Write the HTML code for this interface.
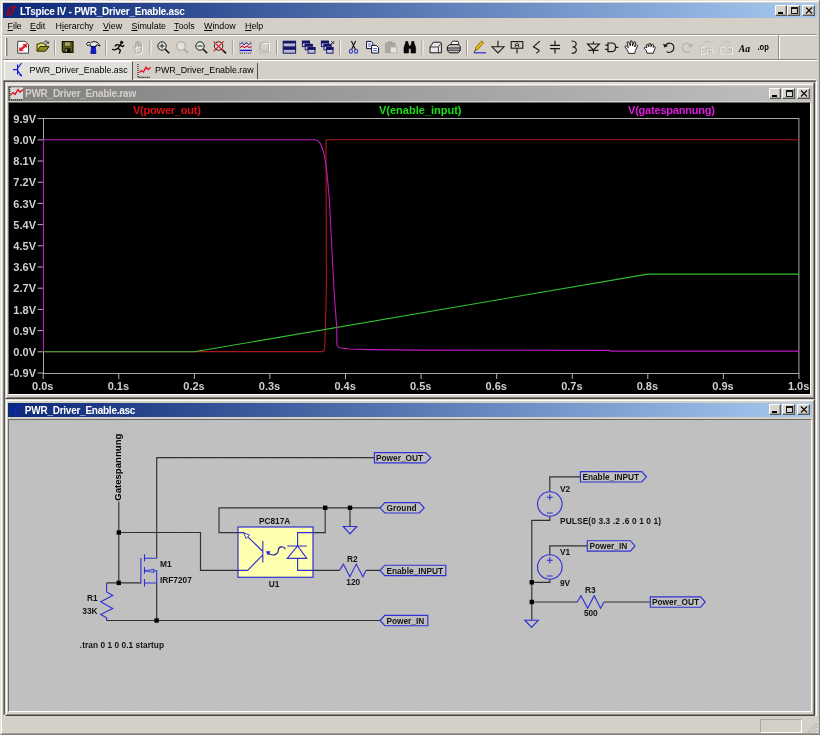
<!DOCTYPE html>
<html><head><meta charset="utf-8"><title>LTspice IV - PWR_Driver_Enable.asc</title>
<style>
html,body{margin:0;padding:0;}
body{will-change:transform;width:820px;height:735px;overflow:hidden;position:relative;background:#d4d0c8;font-family:"Liberation Sans",sans-serif;}
.abs{position:absolute;}
#frame{left:0;top:0;width:820px;height:735px;box-sizing:border-box;border:1px solid #e4e2dc;border-right-color:#8c8a84;border-bottom-color:#807e78;background:#d4d0c8;}
#frame2{left:1px;top:1px;width:818px;height:733px;box-sizing:border-box;border:1px solid #fff;border-right-color:#c8c6c0;border-bottom-color:#a09e98;}
#title{left:3px;top:3px;width:814px;height:15px;background:linear-gradient(to right,#0c2878,#a6caf0);}
#title span{position:absolute;left:17px;top:1.6px;font-weight:bold;font-size:10px;color:#fff;line-height:13px;white-space:nowrap;letter-spacing:-0.25px}
.cbtn{position:absolute;box-sizing:border-box;background:#d8d5ce;border:1px solid #fff;border-right-color:#5c5a56;border-bottom-color:#5c5a56;box-shadow:inset -1px -1px 0 #a4a29c;}
#menu{left:3px;top:19px;width:814px;height:15px;font-size:8.9px;color:#000;}
#menu span{position:absolute;top:1.2px;line-height:12px;white-space:nowrap}
#menu u{text-decoration:underline;text-underline-offset:1px}
#tbline{left:3px;top:34px;width:814px;height:1px;background:#9a9890;}
#tbline2{left:3px;top:35px;width:814px;height:1px;background:#fff;}
.sep{position:absolute;top:39px;width:1px;height:17px;background:#8c8a84;box-shadow:1px 0 0 #fff;}
.ico{position:absolute;top:40px;height:14px;overflow:visible}
#tabs{left:3px;top:59px;width:814px;height:21px;}
.plbl{position:absolute;font-weight:bold;font-size:11px;line-height:12px;white-space:nowrap;}
.ylab{color:#d0d0d0;width:28px;text-align:right;left:8px}
.xlab{color:#d0d0d0;width:40px;text-align:center;top:380px}
.st{font-weight:bold;font-size:8.3px;fill:#141414;font-family:"Liberation Sans",sans-serif}
</style></head><body>
<div id="frame" class="abs"></div><div id="frame2" class="abs"></div>
<!-- TITLE -->
<div id="title" class="abs"><span>LTspice IV - PWR_Driver_Enable.asc</span>
<svg class="abs" style="left:0px;top:0px" width="18" height="15" viewBox="3 3 18 15"><path d="M5.8 15.4 L7.8 8.6 L10.2 8.6 L9 13 L11.4 13 L10.8 15.4 Z M10.8 6 H16.6 L16 8.2 H14.8 L13.2 13.6 H10.8 L12.4 8.2 H10.2 Z" fill="#8c0a24"/></svg>
</div>
<div class="cbtn" style="left:775px;top:5px;width:12px;height:11px"><div class="abs" style="left:2px;top:6px;width:5px;height:2px;background:#000"></div></div>
<div class="cbtn" style="left:787px;top:5px;width:13px;height:11px"><div class="abs" style="left:2.5px;top:1px;width:7.5px;height:7px;box-sizing:border-box;border:1px solid #181818;border-top-width:2px"></div></div>
<div class="cbtn" style="left:802px;top:5px;width:13px;height:11px"><svg class="abs" style="left:2px;top:1px" width="8" height="7" viewBox="0 0 8 7"><path d="M1 0.5 L7 6.5 M7 0.5 L1 6.5" stroke="#101010" stroke-width="1.3"/></svg></div>
<!-- MENU -->
<div id="menu" class="abs">
<span style="left:4.5px"><u>F</u>ile</span>
<span style="left:27px"><u>E</u>dit</span>
<span style="left:52.5px">H<u>i</u>erarchy</span>
<span style="left:100px"><u>V</u>iew</span>
<span style="left:128.5px"><u>S</u>imulate</span>
<span style="left:171px"><u>T</u>ools</span>
<span style="left:201px"><u>W</u>indow</span>
<span style="left:242px"><u>H</u>elp</span>
</div>
<div id="tbline" class="abs"></div><div id="tbline2" class="abs"></div>
<!-- TOOLBAR -->
<div id="toolbar"><svg class="abs" style="left:0;top:0" width="820" height="60" viewBox="0 0 820 60" fill="none" stroke-linecap="butt">
<!-- gripper -->
<path d="M5.5 38 V56" stroke="#fff"/><path d="M6.7 38 V56" stroke="#7c7a74" stroke-width="1.4"/>
<!-- separators -->
<g stroke="#9c9a94"><path d="M54.5 40 V55 M105.6 40 V55 M150 40 V55 M232.4 40 V55 M276.5 40 V55 M339.6 40 V55 M422 40 V55 M466.5 40 V55"/></g>
<g stroke="#f4f3f0"><path d="M55.5 40 V55 M106.6 40 V55 M151 40 V55 M233.4 40 V55 M277.5 40 V55 M340.6 40 V55 M423 40 V55 M467.5 40 V55"/></g>
<path d="M80 40 V55" stroke="#c4c8d8"/>
<path d="M778.5 35 V59" stroke="#8c8a84"/><path d="M779.5 35 V59" stroke="#fff"/>
<!-- 1 new -->
<path d="M17.7 41.3 H25 L28.5 44.6 V53.2 H17.7 Z" fill="#fff" stroke="#404040" stroke-width="1"/>
<path d="M19.4 51 L19.8 47.6 L20.8 48.4 L24 45.6 L23 44.6 L26.8 44 L26.4 47.6 L25.4 46.8 L22.2 49.6 L23.2 50.6 Z" fill="#e81828" stroke="#e81828" stroke-width="0.7"/>
<!-- 2 open -->
<path d="M37 51 V44 H39 L40 43 H43.5 L44.5 44.2 H46 V46.3" fill="#d8d870" stroke="#303000" stroke-width="1"/>
<path d="M37 51.2 L40 46.5 H49 L45.5 51.2 Z" fill="#8c8c20" stroke="#303000" stroke-width="1"/>
<path d="M44 42 C45.5 40.4 47.5 40.8 48 43 M48.4 43.6 L46.6 42.6 M48.4 43.6 L49 41.6" stroke="#202020" stroke-width="0.9"/>
<!-- 3 save -->
<path d="M62.3 41.6 H73 V52.4 H63.4 L62.3 51.3 Z" fill="#5a5a12" stroke="#141400" stroke-width="1.2"/>
<rect x="64.6" y="42" width="6" height="4.2" fill="#a4a468" stroke="#303010" stroke-width="0.6"/>
<rect x="64.6" y="48.4" width="6" height="3.6" fill="#101008"/>
<rect x="65.4" y="49.2" width="1.6" height="2.4" fill="#a0a070"/>
<!-- 4 hammer -->
<path d="M86.6 44.5 C86.6 42.2 89 41.8 90.5 43 C93 40.6 98.5 41.2 100 46.2 C98.6 45.2 97 44.8 96 45 V46.6 H90.8 V45 C89.6 44.4 88.6 45.6 87.6 45.6 Z" fill="#e8e8e8" stroke="#101010" stroke-width="1"/>
<path d="M91.6 46.8 H95.2 L96 53.4 H90.8 Z" fill="#1018d0" stroke="#000890" stroke-width="0.8"/>
<!-- 5 runner -->
<g stroke="#000" stroke-width="1.25" stroke-linecap="round" stroke-linejoin="round">
<circle cx="121.6" cy="42.4" r="1.2" fill="#000" stroke-width="0.8"/>
<path d="M120.8 44.2 L117.8 48.4 M119.8 45.2 L116.4 44.6 L115.2 46 M120.2 45.4 L122.8 46.6 L123.8 45.4 M117.8 48.4 L114.6 50 L112.6 49.4 M117.8 48.4 L120.4 50 L119.4 53.2"/></g>
<!-- 6 hand (disabled) -->
<g stroke="#fff" stroke-width="1" transform="translate(0.8,0.8)"><path d="M135.2 53 V50 L133.2 47.4 L134.2 46.6 L135.6 48 V42.6 H137 V46.6 V41.6 H138.6 V46.6 V42.4 H140 V47 V43.8 H141.4 V50 L140.6 53 Z"/></g>
<g stroke="#a8a6a0" stroke-width="1"><path d="M135.2 53 V50 L133.2 47.4 L134.2 46.6 L135.6 48 V42.6 H137 V46.6 V41.6 H138.6 V46.6 V42.4 H140 V47 V43.8 H141.4 V50 L140.6 53 Z"/></g>
<!-- 7 zoom in -->
<g stroke="#101010"><circle cx="162" cy="46" r="4.2" stroke-width="0.95" fill="#dde6e0"/><path d="M159.6 46 H164.4 M162 43.6 V48.4" stroke-width="0.9"/><path d="M165.2 49.2 L169.2 53.2" stroke-width="1.6"/></g>
<!-- 8 zoom gray -->
<g stroke="#a8a6a0"><circle cx="181" cy="46" r="4.3" stroke-width="1.1" fill="#e4e2dc"/><path d="M184.2 49.2 L188.2 53.2" stroke-width="1.7"/></g>
<!-- 9 zoom out -->
<g stroke="#101010"><circle cx="200" cy="46" r="4.2" stroke-width="0.95" fill="#dde6e0"/><path d="M197.6 46 H202.4" stroke-width="0.9"/><path d="M203.2 49.2 L207.2 53.2" stroke-width="1.6"/></g>
<!-- 10 zoom cancel -->
<g stroke="#101010"><circle cx="218.6" cy="46" r="4.2" stroke-width="0.95" fill="#dde6e0"/><path d="M221.8 49.2 L226 53.4" stroke-width="1.6"/></g>
<path d="M213.4 41.4 L223.4 51 M223.6 41.4 L213.6 51.4" stroke="#e02020" stroke-width="1.3"/>
<!-- 11 waveform -->
<rect x="239.6" y="42" width="12" height="10.6" fill="#dcdcec" stroke="#8888a8" stroke-width="0.5"/>
<path d="M240 44.6 L242 42.6 L244 44.8 L246.4 42.6 L248.6 44.8 L251 42.8" stroke="#101030" stroke-width="1"/>
<path d="M240 47.4 L242.4 46 L244.6 47.6 L247 46 L249.2 47.6 L251.4 46.4" stroke="#e01020" stroke-width="1.1"/>
<path d="M240 50.4 H251.6" stroke="#1010c0" stroke-width="1.4"/>
<path d="M240 53.4 H252" stroke="#404040" stroke-width="0.8" stroke-dasharray="1 1"/>
<!-- 12 gray icon -->
<g stroke="#aeaca6" stroke-width="0.9"><path d="M259.6 41.6 V53 M259.6 52.6 H271.4" stroke-dasharray="1.2 0.8"/><path d="M262 42.4 H268.6 V51 H262 M262 42.4 C259.4 44 259.4 49.4 262 51"/></g>
<path d="M263 43.4 H269.6 V52" stroke="#fff" stroke-width="0.8"/>
<!-- 13 tile -->
<rect x="283.2" y="41.2" width="12.4" height="5.6" fill="#b8b8d8" stroke="#181868" stroke-width="1"/><rect x="283.2" y="41.2" width="12.4" height="2.2" fill="#10105c"/>
<rect x="283.2" y="47.6" width="12.4" height="5.6" fill="#b8b8d8" stroke="#181868" stroke-width="1"/><rect x="283.2" y="47.6" width="12.4" height="2.2" fill="#10105c"/>
<!-- 14 cascade -->
<g stroke="#181868" stroke-width="0.95"><rect x="302.4" y="41.2" width="7" height="5.4" fill="#c8c8e0"/><rect x="302.4" y="41.2" width="7" height="1.8" fill="#10105c"/>
<rect x="305.2" y="44.4" width="7" height="5.4" fill="#c8c8e0"/><rect x="305.2" y="44.4" width="7" height="1.8" fill="#10105c"/>
<rect x="308" y="47.6" width="7" height="5.6" fill="#c8c8e0"/><rect x="308" y="47.6" width="7" height="1.8" fill="#10105c"/></g>
<!-- 15 close all -->
<g stroke="#181868" stroke-width="0.95"><rect x="321.4" y="41.2" width="7" height="5.4" fill="#c8c8e0"/><rect x="321.4" y="41.2" width="7" height="1.8" fill="#10105c"/>
<rect x="324" y="44.4" width="7" height="5.4" fill="#c8c8e0"/><rect x="324" y="44.4" width="7" height="1.8" fill="#10105c"/>
<rect x="326.6" y="47.6" width="6.4" height="5.6" fill="#c8c8e0"/><rect x="326.6" y="47.6" width="6.4" height="1.8" fill="#10105c"/></g>
<path d="M331.4 41.2 L334.2 44 M334.2 41.2 L331.4 44" stroke="#101030" stroke-width="0.9"/>
<!-- 16 scissors -->
<path d="M351.4 41 L355.6 50 M355.6 41 L351.4 50" stroke="#101010" stroke-width="1.1"/>
<ellipse cx="350.9" cy="51.3" rx="1.6" ry="2" stroke="#2838c0" stroke-width="1.1"/><ellipse cx="356.1" cy="51.3" rx="1.6" ry="2" stroke="#2838c0" stroke-width="1.1"/>
<!-- 17 copy -->
<path d="M366.6 41.4 H371 L372.8 43.2 V48.6 H366.6 Z" fill="#fff" stroke="#101040" stroke-width="1"/>
<path d="M371.6 45.4 H376.4 L378.6 47.6 V53 H371.6 Z" fill="#fff" stroke="#101040" stroke-width="1"/>
<path d="M368 44 H371 M368 46 H370.6 M373.2 48.6 H377 M373.2 50.6 H377" stroke="#3040a0" stroke-width="0.8"/>
<!-- 18 paste gray -->
<path d="M385.4 43 H395 V52.4 H385.4 Z" fill="#aaa8a2" stroke="#a09e98" stroke-width="1"/><rect x="388" y="41.4" width="4.4" height="2.4" fill="#a09e98"/>
<rect x="390.4" y="47" width="6.4" height="6" fill="#e4e2dc" stroke="#b0aea8" stroke-width="0.8"/>
<!-- 19 binoculars -->
<path d="M404 53 V47.4 L405.6 43 V41.6 H408 V43 L409 46 H410.6 L411.6 43 V41.6 H414 V43 L415.6 47.4 V53 H411 V48.6 H408.6 V53 Z" fill="#080808" stroke="#000" stroke-width="0.6"/>
<!-- 20 print setup -->
<path d="M430 52.8 V47 L433.4 42.2 H440 C441.6 42.2 441.6 44 441.4 46 V52.8 Z" fill="#e8e8e8" stroke="#181818" stroke-width="1"/>
<path d="M430 47 H438.4 L441 43.4 M438.4 47 V52.8" stroke="#181818" stroke-width="0.8"/>
<!-- 21 print -->
<path d="M450.6 45 L452.4 41.2 H458 L459 45" fill="#fff" stroke="#181818" stroke-width="0.9"/>
<path d="M447.4 50.6 V46.6 L449.6 44.6 H458.4 L460.2 46.6 V50.6 L458.4 52.8 H449.4 Z" fill="#c8c8c8" stroke="#101010" stroke-width="1"/>
<path d="M447.6 48 H460 M448 50.2 H459.8" stroke="#101010" stroke-width="0.9"/>
<!-- 22 pencil -->
<path d="M475 50.6 L476 47.4 L481.6 41 L483.6 42.6 L478 49.2 Z" fill="#f0c010" stroke="#705000" stroke-width="0.8"/>
<path d="M475 50.8 L474.2 52.6" stroke="#202020" stroke-width="1"/>
<path d="M474 52.8 H486" stroke="#3030d0" stroke-width="1.2"/>
<!-- 23 ground -->
<path d="M498 40.8 V46.8 M492 46.8 H504 L498 53 Z" stroke="#181818" stroke-width="1.1"/>
<!-- 24 label -->
<rect x="511.2" y="41.6" width="11.6" height="6.6" stroke="#181818" stroke-width="1.1"/><path d="M517 48.2 V53.4" stroke="#181818" stroke-width="1.1"/>
<path d="M515.4 47 V44.2 L516.4 43.2 H517.6 L518.6 44.2 V47 M515.4 45.4 H518.6" stroke="#181818" stroke-width="0.9"/>
<!-- 25 resistor -->
<path d="M539.8 41.2 L533.4 46.8 L538.8 50 C539.8 51 537.8 52 536.4 53.4" stroke="#181818" stroke-width="1.1"/>
<!-- 26 capacitor -->
<path d="M555 40.8 V45.4 M550 45.4 H560 M550 48.6 H560 M555 48.6 V53.4" stroke="#181818" stroke-width="1.2"/>
<!-- 27 inductor -->
<path d="M571.6 41 C577.6 41 577.6 47 572.4 47 C577.8 47 577.8 53.2 571.6 53.2" stroke="#181818" stroke-width="1.1"/>
<!-- 28 diode -->
<path d="M593.4 41.4 V44 M593.4 50 V53.4 M587.4 44 H599.4 L593.4 50 Z M588.4 50.4 H598.4" stroke="#181818" stroke-width="1.1"/>
<!-- 29 gate -->
<path d="M605.2 45.2 H608 M605.2 49.4 H608 M608 43 H612 C616.8 43 616.8 51.6 612 51.6 H608 Z M615.6 47.3 H618.4" stroke="#181818" stroke-width="1.2"/>
<!-- 30 move hand -->
<path d="M628.6 53.4 L627.6 50.6 L624.8 46.6 L626 45.6 L628.4 47.8 L627 42.4 L628.4 41.8 L630.4 46 L630.4 41 L632 41 L632.6 46 L634 41.8 L635.6 42.2 L634.6 47 L636.6 44.6 L637.6 45.6 L635.4 50.6 L634.8 53.4 Z" fill="#fff" stroke="#101010" stroke-width="0.9"/>
<!-- 31 drag hand -->
<path d="M647 53.2 L646.4 50.8 L644.2 48.2 L645.2 46.8 L646.8 48 L646.6 44.8 L648 44.4 L648.8 46.8 L649 43.6 L650.6 43.6 L651 46.8 L652 44.2 L653.4 44.6 L653.2 47.6 L654.4 46.4 L655.4 47.2 L654 51 L653.4 53.2 Z" fill="#fff" stroke="#101010" stroke-width="0.9"/>
<!-- 32 undo -->
<path d="M665.4 46 C667.4 41.6 673.6 42.6 673.8 47.4 C674 51.6 669.6 53.6 666.6 51.6" stroke="#181818" stroke-width="1.1"/><path d="M663 43.6 L664.4 47.6 L668 46 Z" fill="#181818"/>
<!-- 33 redo gray -->
<path d="M690.6 46 C688.6 41.6 682.6 42.6 682.4 47.4 C682.2 51.6 686.6 53.6 689.6 51.6" stroke="#b4b2ac" stroke-width="1.2"/><path d="M693 43.4 L691.6 47.8 L687.6 46 Z" fill="#b4b2ac"/>
<!-- 34 rotate gray -->
<g stroke="#b4b2ac" stroke-width="1"><path d="M703 43.6 C704.6 40.8 709.4 40.8 711 43.6" stroke-dasharray="1.6 1"/><path d="M704.4 46 H700.4 V53 H704.4 M700.4 49.4 H703.4 M706.4 53 V48.4 H709 V53 M709 48.4 H712 V53"/></g>
<g stroke="#fff" stroke-width="0.7" transform="translate(0.9,0.9)"><path d="M704.4 46 H700.4 V53 H704.4 M706.4 53 V48.4 H709 M709 48.4 H712 V53"/></g>
<!-- 35 mirror gray -->
<g stroke="#b4b2ac" stroke-width="1"><path d="M722.6 43.6 C724.2 40.8 729 40.8 730.6 43.6" stroke-dasharray="1.6 1"/><path d="M724 46 H720 V53 H724 M720 49.4 H723 M727.6 46 H731.6 V53 H727.6 M731.6 49.4 H728.6"/></g>
<g stroke="#fff" stroke-width="0.7" transform="translate(0.9,0.9)"><path d="M724 46 H720 V53 H724 M727.6 46 H731.6 V53 H727.6"/></g>
<!-- 36 Aa -->
<text x="738.8" y="51.8" font-family="Liberation Serif,serif" font-style="italic" font-weight="bold" font-size="10.4" fill="#000" stroke="none" textLength="11.4" lengthAdjust="spacingAndGlyphs">Aa</text>
<!-- 37 .op -->
<text x="757.4" y="49.5" font-family="Liberation Sans,sans-serif" font-weight="bold" font-size="8.6" fill="#000" stroke="none" textLength="11.4" lengthAdjust="spacingAndGlyphs">.op</text>
</svg>
</div>
<div id="mdi"><div class="abs" style="left:3px;top:59px;width:814px;height:1px;background:#8c8a84"></div>
<div class="abs" style="left:3px;top:60px;width:814px;height:1px;background:#fff"></div>
<!-- active tab -->
<div class="abs" style="left:4px;top:61px;width:129px;height:19px;box-sizing:border-box;background:#e2e0da;border-top:1px solid #fff;border-left:1px solid #fff;border-right:1px solid #55534e;"></div>
<div class="abs" style="left:134px;top:63px;width:124px;height:16px;box-sizing:border-box;border-right:1px solid #55534e;"></div>
<svg class="abs" style="left:0;top:56px" width="300" height="50" viewBox="0 56 300 50" fill="none">
<path d="M13 69.6 H17.4 M17.6 64.6 V74.6 M17.8 68 L21.6 63 M17.8 71 L21.6 76.2" stroke="#1414e0" stroke-width="1.2"/><path d="M22 76.6 L19.2 75.4 L21 73.6 Z" fill="#1414e0"/>
<path d="M138 64 V77.4 H150.6" stroke="#101010" stroke-width="1.1" stroke-dasharray="1.1 0.9"/>
<path d="M139.4 72.6 L141.6 70.6 L143.4 72 L146 67.2 L148 69.6 L150.6 67.6" stroke="#e01020" stroke-width="1.3"/>
</svg>
<div class="abs" style="left:29.5px;top:64px;font-size:8.9px;line-height:12px;color:#000;white-space:nowrap">PWR_Driver_Enable.asc</div>
<div class="abs" style="left:155px;top:64px;font-size:8.9px;line-height:12px;color:#000;white-space:nowrap">PWR_Driver_Enable.raw</div>
<div class="abs" style="left:133px;top:78.5px;width:683px;height:1px;background:#f6f5f2"></div>
<!-- MDI client edge -->
<div class="abs" style="left:3px;top:80px;width:814px;height:636px;box-sizing:border-box;border:1px solid #8a8882;border-right-color:#fff;border-bottom-color:#fff;background:#d4d0c8"></div>
<div class="abs" style="left:4px;top:81px;width:812px;height:634px;box-sizing:border-box;border:1px solid #58564f;border-right-color:#d4d0c8;border-bottom-color:#d4d0c8;"></div>
<!-- child window 1 (plot) -->
<div class="abs" style="left:5px;top:82px;width:810px;height:317px;box-sizing:border-box;border:1px solid #dcdad4;border-right-color:#48463f;border-bottom-color:#48463f;background:#d4d0c8"></div>
<div class="abs" style="left:6px;top:83px;width:808px;height:315px;box-sizing:border-box;border:1px solid #fff;border-top-color:#dcdad4;border-right-color:#8a8882;border-bottom-color:#8a8882;"></div>
<div class="abs" style="left:7px;top:84px;width:806px;height:1px;background:#f8f7f4"></div>
<div class="abs" style="left:8px;top:86px;width:804px;height:15px;background:linear-gradient(to right,#808080,#c0c0c0)"></div>
<div class="abs" style="left:25px;top:87px;font-size:10px;letter-spacing:-0.25px;font-weight:bold;line-height:13px;color:#d4d0c8;white-space:nowrap">PWR_Driver_Enable.raw</div>
<svg class="abs" style="left:8px;top:86px" width="18" height="15" viewBox="8 86 18 15" fill="none">
<rect x="10" y="87.4" width="13" height="12" fill="#e8e8e8" opacity="0.85"/>
<path d="M9.8 87 V99.8 H23" stroke="#101010" stroke-width="1.1" stroke-dasharray="1.1 0.9"/>
<path d="M10.6 95 L13 92.6 L15 94.4 L18 89.6 L20 92 L23 89.8" stroke="#e01020" stroke-width="1.4"/></svg>
<div class="cbtn" style="left:769px;top:88px;width:12px;height:11px"><div class="abs" style="left:2px;top:6px;width:5px;height:2px;background:#000"></div></div>
<div class="cbtn" style="left:782px;top:88px;width:13px;height:11px"><div class="abs" style="left:2.5px;top:1px;width:7.5px;height:7px;box-sizing:border-box;border:1px solid #181818;border-top-width:2px"></div></div>
<div class="cbtn" style="left:797px;top:88px;width:13px;height:11px"><svg class="abs" style="left:2px;top:1px" width="8" height="7" viewBox="0 0 8 7"><path d="M1 0.5 L7 6.5 M7 0.5 L1 6.5" stroke="#101010" stroke-width="1.3"/></svg></div>
<!-- plot client -->
<div id="plot" class="abs" style="left:8px;top:102px;width:803px;height:293px;box-sizing:border-box;border:1px solid #6c6a64;border-right-color:#fff;border-bottom-color:#fff;background:#000"></div>
<svg class="abs" style="left:0;top:100px" width="820" height="300" viewBox="0 100 820 300" fill="none">
<rect x="43.5" y="118.5" width="755.4" height="255" stroke="#a8a8a8" stroke-width="1"/>
<path d="M37.6 118.6 H43.2 M37.6 139.8 H43.2 M37.6 161.0 H43.2 M37.6 182.2 H43.2 M37.6 203.4 H43.2 M37.6 224.6 H43.2 M37.6 245.8 H43.2 M37.6 267.0 H43.2 M37.6 288.2 H43.2 M37.6 309.4 H43.2 M37.6 330.6 H43.2 M37.6 351.8 H43.2 M37.6 373.0 H43.2 M43.2 373.0 V379 M118.8 373.0 V379 M194.4 373.0 V379 M269.9 373.0 V379 M345.5 373.0 V379 M421.1 373.0 V379 M496.7 373.0 V379 M572.3 373.0 V379 M647.8 373.0 V379 M723.4 373.0 V379 M799.0 373.0 V379 " stroke="#b0b0b0" stroke-width="1"/>
<path d="M43.2 351.6 H322 C324 351.6 324.6 350 324.8 346.6 L326.4 290 L326 139.8 H799" stroke="#ac1818" stroke-width="1.1"/>
<path d="M43.2 351.8 H194.4 L647.8 274.1 H799" stroke="#30c030" stroke-width="1.1"/>
<path d="M43.4 351.8 V139.8 H315 C319 139.8 322 146 323.7 152.6 C326 162 327.5 178 328.1 185.3 L329.4 200 L334 290 L336.7 327 L336.9 344 C337.1 347 339 348 342.2 348.3 L350 349 L370 349.6 L420 350.1 L608 350.4 L612 351.1 H799" stroke="#bc1cbc" stroke-width="1.1"/>
</svg>
<div class="plbl ylab" style="top:112.8px">9.9V</div>
<div class="plbl ylab" style="top:134.0px">9.0V</div>
<div class="plbl ylab" style="top:155.2px">8.1V</div>
<div class="plbl ylab" style="top:176.4px">7.2V</div>
<div class="plbl ylab" style="top:197.6px">6.3V</div>
<div class="plbl ylab" style="top:218.8px">5.4V</div>
<div class="plbl ylab" style="top:240.0px">4.5V</div>
<div class="plbl ylab" style="top:261.2px">3.6V</div>
<div class="plbl ylab" style="top:282.4px">2.7V</div>
<div class="plbl ylab" style="top:303.6px">1.8V</div>
<div class="plbl ylab" style="top:324.8px">0.9V</div>
<div class="plbl ylab" style="top:346.0px">0.0V</div>
<div class="plbl ylab" style="top:367.2px">-0.9V</div>
<div class="plbl xlab" style="left:22.8px">0.0s</div>
<div class="plbl xlab" style="left:98.4px">0.1s</div>
<div class="plbl xlab" style="left:174.0px">0.2s</div>
<div class="plbl xlab" style="left:249.5px">0.3s</div>
<div class="plbl xlab" style="left:325.1px">0.4s</div>
<div class="plbl xlab" style="left:400.7px">0.5s</div>
<div class="plbl xlab" style="left:476.3px">0.6s</div>
<div class="plbl xlab" style="left:551.9px">0.7s</div>
<div class="plbl xlab" style="left:627.4px">0.8s</div>
<div class="plbl xlab" style="left:703.0px">0.9s</div>
<div class="plbl xlab" style="left:778.6px">1.0s</div>
<div class="plbl" style="left:133px;top:103.8px;color:#e01018;letter-spacing:-0.22px">V(power_out)</div>
<div class="plbl" style="left:379px;top:103.8px;color:#18e018">V(enable_input)</div>
<div class="plbl" style="left:628px;top:103.8px;color:#e018e0;letter-spacing:-0.2px">V(gatespannung)</div>
<!-- child window 2 (schematic) -->
<div class="abs" style="left:5px;top:399px;width:810px;height:317px;box-sizing:border-box;border:1px solid #dcdad4;border-right-color:#48463f;border-bottom-color:#48463f;background:#d4d0c8"></div>
<div class="abs" style="left:6px;top:400px;width:808px;height:315px;box-sizing:border-box;border:1px solid #fff;border-right-color:#8a8882;border-bottom-color:#8a8882;"></div>
<div class="abs" style="left:8px;top:403px;width:804px;height:14px;background:linear-gradient(to right,#0c2878,#a6caf0)"></div>
<div class="abs" style="left:24.8px;top:403.5px;font-size:10px;letter-spacing:-0.25px;font-weight:bold;line-height:13px;color:#fff;white-space:nowrap">PWR_Driver_Enable.asc</div>
<svg class="abs" style="left:8px;top:403px" width="18" height="15" viewBox="8 403 18 15" fill="none">
<path d="M11 410.6 H15.4 M15.6 405.6 V415.6 M15.8 409 L19.6 404.6 M15.8 412 L19.6 416.6" stroke="#1428d8" stroke-width="1.3" opacity="0.75"/></svg>
<div class="cbtn" style="left:769px;top:404px;width:12px;height:11px"><div class="abs" style="left:2px;top:6px;width:5px;height:2px;background:#000"></div></div>
<div class="cbtn" style="left:782px;top:404px;width:13px;height:11px"><div class="abs" style="left:2.5px;top:1px;width:7.5px;height:7px;box-sizing:border-box;border:1px solid #181818;border-top-width:2px"></div></div>
<div class="cbtn" style="left:797px;top:404px;width:13px;height:11px"><svg class="abs" style="left:2px;top:1px" width="8" height="7" viewBox="0 0 8 7"><path d="M1 0.5 L7 6.5 M7 0.5 L1 6.5" stroke="#101010" stroke-width="1.3"/></svg></div>
<div id="sch" class="abs" style="left:8px;top:419px;width:804px;height:293px;box-sizing:border-box;border:1px solid #6c6a64;border-right-color:#fff;border-bottom-color:#fff;background:#c0c0c0"></div>
<svg class="abs" style="left:9px;top:420px" width="802" height="291" viewBox="9 420 802 291" fill="none">
<defs><pattern id="grid" x="12.1" y="433.1" width="12.52" height="12.47" patternUnits="userSpaceOnUse"><rect x="0" y="0" width="1" height="1" fill="#b0b0b0"/></pattern></defs>
<rect x="9" y="420" width="802" height="291" fill="url(#grid)"/>
<!-- wires -->
<g stroke="#303030" stroke-width="1.15" stroke-linejoin="miter">
<path d="M118.8 501.8 V582.9"/>
<path d="M118.8 532.5 H200.5 V570.4 H238"/>
<path d="M106.6 582.9 H140.9"/>
<path d="M106.6 620.5 H380"/>
<path d="M156.7 583 V620.5"/>
<path d="M156.7 558.2 V457.6 H374.4"/>
<path d="M238 532.6 H219 V507.8 H380"/>
<path d="M313 532.6 H325.2 V507.8"/>
<path d="M350 507.8 V526.5"/>
<path d="M313 570.4 H339.5 M365.9 570.4 H380"/>
<path d="M549.8 491.6 V476.8 H580.4"/>
<path d="M549.8 516.4 V520.4 H531.8 V620.2"/>
<path d="M549.8 554.8 V545.9 H587.3"/>
<path d="M549.8 579.2 V582.3 H531.8"/>
<path d="M531.8 602 H577.3 M604 602 H650.3"/>
</g>
<g fill="#000">
<rect x="116.6" y="530.3" width="4.4" height="4.4"/><rect x="116.6" y="580.7" width="4.4" height="4.4"/><rect x="154.4" y="618.3" width="4.4" height="4.4"/>
<rect x="323" y="505.6" width="4.4" height="4.4"/><rect x="347.8" y="505.6" width="4.4" height="4.4"/>
<rect x="529.6" y="580.1" width="4.4" height="4.4"/><rect x="529.6" y="599.8" width="4.4" height="4.4"/>
</g>
<!-- symbols -->
<g stroke="#3030d4" stroke-width="1.12">
<!-- R1 -->
<path d="M106.6 582.9 V592 L112.7 595.4 L100.7 601.8 L112.7 608.4 L100.7 614.6 L106.6 617.8 V620.6"/>
<!-- M1 -->
<path d="M140.9 558 V583.4 M144.5 554.3 V561.6 M144.5 567 V573.8 M144.5 579 V586.5 M144.5 558.2 H156.7 M144.5 583 H156.7 M153 570.7 H156.7 V583"/>
<path d="M145 570.8 L153.8 569.2 V572.4 Z" stroke-width="0.9"/>
<!-- U1 -->
<rect x="238" y="527" width="75" height="50.3" fill="#ffffb0" stroke-width="1.2"/>
<path d="M238 532.6 H243.4 L262.4 551 M238 570.4 H247.6 L262.4 555.4 M262.8 541 V562.4"/>
<path d="M243.6 532.8 L249.6 535 L246 538.6 Z" fill="#ffffb0" stroke-width="0.9"/>
<path d="M313 532.6 H297.6 V546 M297.6 558.4 V570.4 H313 M287.2 546 H306.8 M287.2 558.4 H306.8 L297.6 546 Z"/>
<path d="M285.4 549.2 C284 545.6 278.6 546.2 278.4 549.8 C278.2 553.4 276 555.2 272.6 555 C269.6 554.8 268.4 553.4 267.4 552.4" stroke-width="1.2" stroke="#1c1ca0"/>
<path d="M266.4 551.6 L270.2 551.6 L267.8 555 Z" fill="#2828d0" stroke-width="0.6"/>
<!-- GND 1 -->
<path d="M343.2 526.5 H356.8 L350 534 Z"/>
<!-- R2 -->
<path d="M339.5 570.4 L343.4 564.1 L349.8 576.8 L356.3 564.1 L362.9 576.8 L365.9 570.4"/>
<!-- flags -->
<path d="M374.4 452.6 H425.6 L430.8 457.7 L425.6 462.8 H374.4 Z" stroke-width="1.15"/>
<path d="M380 507.8 L384.8 502.6 H419.4 L424.2 507.8 L419.4 513 H384.8 Z" stroke-width="1.15"/>
<path d="M380 570.4 L384.8 565.2 H445.8 V575.6 H384.8 Z" stroke-width="1.15"/>
<path d="M380 620.5 L384.8 615.3 H427.8 V625.7 H384.8 Z" stroke-width="1.15"/>
<path d="M580.4 471.6 H641.8 L646.4 476.8 L641.8 482 H580.4 Z" stroke-width="1.15"/>
<path d="M587.3 540.7 H630.4 L635 545.9 L630.4 551.1 H587.3 Z" stroke-width="1.15"/>
<path d="M650.3 596.8 H700.6 L705.2 602 L700.6 607.2 H650.3 Z" stroke-width="1.15"/>
<!-- V2 -->
<circle cx="549.8" cy="504" r="12.3"/><path d="M546.8 497.2 H552.8 M549.8 494.2 V500.2 M546.8 513 H552.8"/>
<!-- V1 -->
<circle cx="549.8" cy="567" r="12.3"/><path d="M546.8 560.2 H552.8 M549.8 557.2 V563.2 M546.8 576 H552.8"/>
<!-- R3 -->
<path d="M577.3 602 L581 595.7 L587.6 608.2 L594.2 595.7 L600.6 608.2 L604 602"/>
<!-- GND 2 -->
<path d="M524.8 620.2 H538.4 L531.6 627.4 Z"/>
</g>
<!-- texts -->
<g class="st">
<text x="160" y="566.9">M1</text>
<text x="160" y="582.8">IRF7207</text>
<text x="97.6" y="601" text-anchor="end">R1</text>
<text x="97.6" y="614" text-anchor="end">33K</text>
<text x="79.8" y="648.2" textLength="84.2" lengthAdjust="spacing">.tran 0 1 0 0.1 startup</text>
<text x="274.6" y="523.8" text-anchor="middle">PC817A</text>
<text x="274" y="586.8" text-anchor="middle">U1</text>
<text x="352.4" y="561.6" text-anchor="middle">R2</text>
<text x="353.2" y="584.6" text-anchor="middle">120</text>
<text x="560" y="492">V2</text>
<text x="560" y="523.8" textLength="101" lengthAdjust="spacing">PULSE(0 3.3 .2 .6 0 1 0 1)</text>
<text x="560" y="555.4">V1</text>
<text x="560" y="586">9V</text>
<text x="590.2" y="593.3" text-anchor="middle">R3</text>
<text x="590.8" y="616.2" text-anchor="middle">500</text>
<text x="376" y="460.8">Power_OUT</text>
<text x="386.6" y="510.9">Ground</text>
<text x="386.4" y="573.5">Enable_INPUT</text>
<text x="386.4" y="623.6">Power_IN</text>
<text x="582.4" y="479.9">Enable_INPUT</text>
<text x="589.4" y="549">Power_IN</text>
<text x="652" y="605.1">Power_OUT</text>
<text transform="translate(120.5,500.8) rotate(-90)" style="font-size:9.6px;fill:#000">Gatespannung</text>
</g>
</svg>

</div>
<div id="status"><div class="abs" style="left:760px;top:719px;width:42px;height:14px;box-sizing:border-box;border:1px solid #a8a6a0;border-right-color:#fff;border-bottom-color:#fff"></div>
<svg class="abs" style="left:805px;top:721px" width="13" height="13" viewBox="0 0 13 13"><path d="M3 11.6 L11.6 3 M6 11.6 L11.6 6 M9 11.6 L11.6 9" stroke="#8a8882" stroke-width="1"/><path d="M3.9 11.6 L11.6 3.9 M6.9 11.6 L11.6 6.9 M9.9 11.6 L11.6 9.9" stroke="#fff" stroke-width="0.7"/></svg>
</div>
</body></html>
